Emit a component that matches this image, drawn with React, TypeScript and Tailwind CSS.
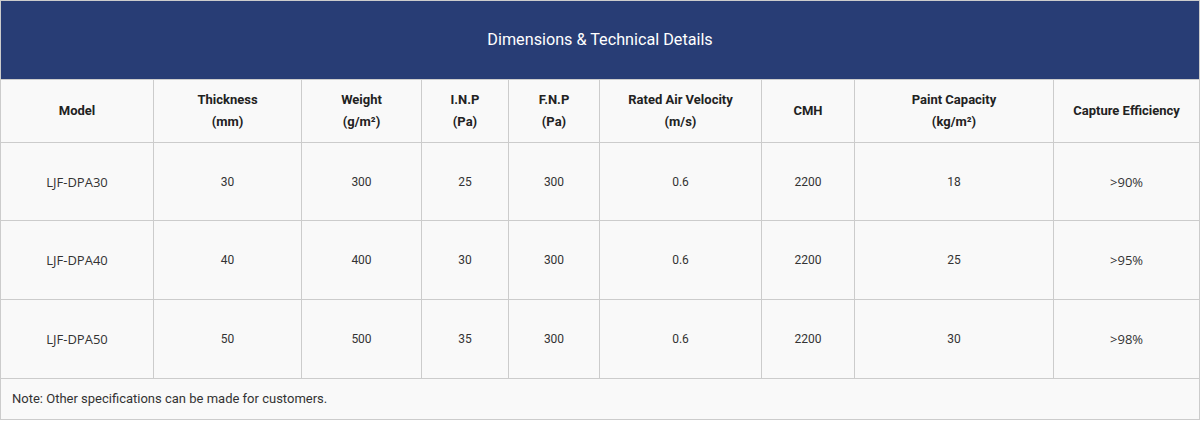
import React from "react";

const heads: React.ReactNode[] = [
  "Model",
  <>Thickness<br />(mm)</>,
  <>Weight<br />(g/m²)</>,
  <>I.N.P<br />(Pa)</>,
  <>F.N.P<br />(Pa)</>,
  <>Rated Air Velocity<br />(m/s)</>,
  "CMH",
  <>Paint Capacity<br />(kg/m²)</>,
  "Capture Efficiency",
];

const widths = [153, 148, 120, 87, 91, 162, 93, 199, 146];

const rows = [
  ["LJF-DPA30", "30", "300", "25", "300", "0.6", "2200", "18", ">90%"],
  ["LJF-DPA40", "40", "400", "30", "300", "0.6", "2200", "25", ">95%"],
  ["LJF-DPA50", "50", "500", "35", "300", "0.6", "2200", "30", ">98%"],
];

const rowH = ["h-[78px]", "h-[79px]", "h-[79px]"];

export default function App() {
  return (
    <div className="w-[1200px] bg-white">
      <table
        className="w-[1199px] table-fixed border-collapse bg-[#f9f9f9] text-[#333] text-[13px]"
        style={{ fontFamily: "Roboto, 'Liberation Sans', sans-serif" }}
      >
        <colgroup>
          {widths.map((w, i) => (
            <col key={i} style={{ width: w }} />
          ))}
        </colgroup>
        <thead>
          <tr>
            <th
              colSpan={9}
              className="h-[79px] border border-[#cccccc] bg-[#283d75] text-center align-middle text-[16.2px] font-normal text-white"
            >
              Dimensions &amp; Technical Details
            </th>
          </tr>
          <tr>
            {heads.map((h, i) => (
              <th
                key={i}
                className="h-[63px] border border-[#cccccc] text-center align-middle text-[13px] font-bold leading-[22px] text-[#222]"
              >
                {h}
              </th>
            ))}
          </tr>
        </thead>
        <tbody>
          {rows.map((r, ri) => (
            <tr key={ri}>
              {r.map((c, ci) => (
                <td
                  key={ci}
                  className={
                    rowH[ri] +
                    " border border-[#cccccc] text-center align-middle " +
                    (ci === 0 || ci === 8
                      ? "font-['Open_Sans',sans-serif] text-[13px] leading-[18px]"
                      : "text-[12px] leading-[18px]")
                  }
                >
                  {c}
                </td>
              ))}
            </tr>
          ))}
          <tr>
            <td colSpan={9} className="h-[41px] border border-[#cccccc] px-[11px] text-left align-middle text-[13px]">
              Note: Other specifications can be made for customers.
            </td>
          </tr>
        </tbody>
      </table>
    </div>
  );
}
